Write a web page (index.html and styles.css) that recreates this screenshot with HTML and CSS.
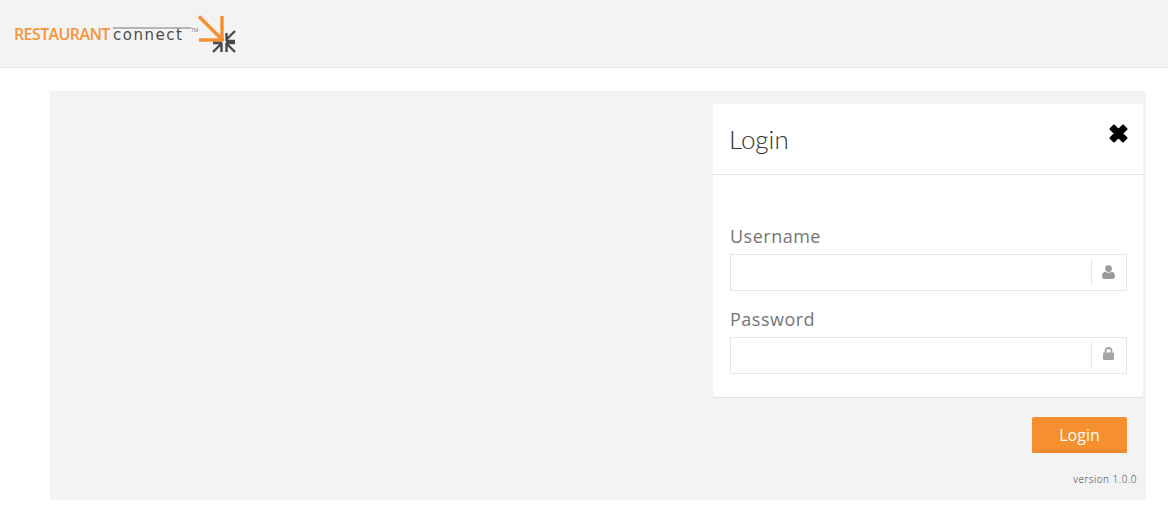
FILE: index.html
```html
<!DOCTYPE html>
<html lang="en">
<head>
  <meta charset="UTF-8">
  <title>Restaurant Connect - Login</title>
  <link rel="stylesheet" href="styles.css">
</head>
<body>
  <header class="topbar">
    <div class="logo">
      <span class="logo-brand">RESTAURANT</span>
      <span class="logo-connect">connect</span>
      <span class="logo-tm">TM</span>
      <svg class="logo-mark" width="40" height="40" viewBox="0 0 40 40" fill="none">
        <g stroke="#f68f2d" stroke-width="3.4">
          <path d="M3 1.500 L26 24.500"/>
          <path d="M26 1 V26"/>
          <path d="M3 25 H28"/>
        </g>
        <g stroke="#4a4a4a" stroke-width="2.400">
          <path d="M39 16 L30 25 M30.500 18 V26 M30 26 H39" />
          <path d="M17 37 L26 28 M25.500 37 V28 M17 28 H26" />
          <path d="M39 37 L30 28 M30.500 37 V28 M30 28 H39" />
        </g>
      </svg>
    </div>
  </header>

  <main class="panel">
    <section class="login-card">
      <div class="login-head">
        <h1>Login</h1>
        <svg class="close-icon" width="19" height="19" viewBox="0 0 19 19">
          <path d="M1.500 5 L5 1.500 L9.500 6 L14 1.500 L17.500 5 L13 9.500 L17.500 14 L14 17.500 L9.500 13 L5 17.500 L1.500 14 L6 9.500 Z" fill="#000" stroke="#000" stroke-width="2" stroke-linejoin="round"/>
        </svg>
      </div>
      <form class="login-form">
        <label for="username">Username</label>
        <div class="field">
          <input id="username" type="text">
          <span class="field-icon">
            <svg width="13" height="14" viewBox="0 0 13 14" fill="#9b9b9b">
              <circle cx="6.500" cy="3.600" r="3.400"/>
              <path d="M0 11 C0 8 2 7 3.500 6.800 C5 8 8 8 9.500 6.800 C11 7 13 8 13 11 C13 13 12 14 11 14 H2 C1 14 0 13 0 11 Z"/>
            </svg>
          </span>
        </div>
        <label for="password">Password</label>
        <div class="field">
          <input id="password" type="password">
          <span class="field-icon">
            <svg class="lock-icon" width="11" height="13" viewBox="0 0 11 13">
              <path d="M2.500 6 V4 A3 3 0 0 1 8.500 4 V6" fill="none" stroke="#a6a6a6" stroke-width="1.800"/>
              <rect x="0" y="5.500" width="11" height="7.500" rx="1" fill="#a6a6a6"/>
            </svg>
          </span>
        </div>
      </form>
    </section>
    <div class="login-actions">
      <button class="btn-login" type="button">Login</button>
    </div>
    <p class="version">version 1.0.0</p>
  </main>
</body>
</html>
```

FILE: styles.css
```css
body {
  font-family: 'Open Sans', sans-serif;
  background-color: #fff;
  margin: 0;
}

.topbar {
  height: 67px;
  background-color: #f3f3f3;
  border-bottom: 1px solid #e8e8e8;
}

.logo {
  display: flex;
  align-items: flex-start;
  padding: 15px 0 0 14px;
}

.logo-brand {
  margin-top: 10px;
  width: 99px;
  color: #f6953a;
  font-size: 16px;
  font-weight: 600;
  line-height: 18px;
  letter-spacing: -0.6px;
  white-space: nowrap;
}

.logo-connect {
  width: 78px;
  margin-top: 12px;
  height: 15px;
  border-top: 2px solid #b5b5b5;
  color: #4d4d4d;
  font-family: 'DejaVu Sans', sans-serif;
  font-size: 15px;
  line-height: 13px;
  letter-spacing: 1.5px;
  white-space: nowrap;
  box-sizing: border-box;
}

.logo-tm {
  width: 7px;
  margin-top: 12px;
  color: #777;
  font-size: 5px;
  line-height: 6px;
}

.logo-mark {
  display: block;
  margin-left: -2px;
}

.panel {
  display: flex;
  flex-direction: column;
  align-items: flex-end;
  height: 409px;
  margin: 23px 22px 0 50px;
  padding: 13px 3px 0 0;
  box-sizing: border-box;
  background-color: #f3f3f3;
}

.login-card {
  width: 430px;
  height: 294px;
  background-color: #fff;
  border-bottom: 1px solid #e0e0e0;
  box-sizing: border-box;
}

.login-head {
  display: flex;
  justify-content: space-between;
  align-items: flex-start;
  height: 71px;
  padding: 0 15px 0 15px;
  border-bottom: 1px solid #e4e4e4;
  box-sizing: border-box;
}

.login-head h1 {
  margin: 19px 0 0 1px;
  color: #333;
  font-family: 'Lato', sans-serif;
  font-size: 26px;
  font-weight: 300;
  line-height: 33px;
}

.close-icon {
  margin-top: 20px;
}

.login-form {
  padding: 47px 16px 0 17px;
}

label {
  display: block;
  height: 32px;
  color: #757575;
  font-size: 18px;
  line-height: 28px;
  letter-spacing: 0.5px;
}

.field {
  display: flex;
  height: 37px;
  margin-bottom: 14px;
  border: 1px solid #e6e6e6;
  box-sizing: border-box;
}

.field input {
  flex: 1;
  min-width: 0;
  border: none;
  outline: none;
  padding: 0 10px;
}

.field-icon {
  display: flex;
  justify-content: center;
  align-items: center;
  width: 35px;
  height: 27px;
  margin-top: 4px;
  padding: 0 2px 2px 0;
  border-left: 1px solid #e6e6e6;
  box-sizing: border-box;
}

.lock-icon {
  margin-top: -2px;
}

.login-actions {
  padding: 19px 16px 0 0;
}

.btn-login {
  display: block;
  width: 95px;
  height: 36px;
  padding: 0;
  background-color: #f68f2d;
  color: #fff;
  font-family: 'Open Sans', sans-serif;
  font-size: 16px;
  border: none;
  border-radius: 2px;
  box-shadow: inset 0 -3px 0 #ee8a2c;
  cursor: pointer;
}

.version {
  margin: 19px 6px 0 0;
  color: #333;
  font-size: 10px;
  font-weight: 300;
  line-height: 14px;
  letter-spacing: 0.5px;
}
```
